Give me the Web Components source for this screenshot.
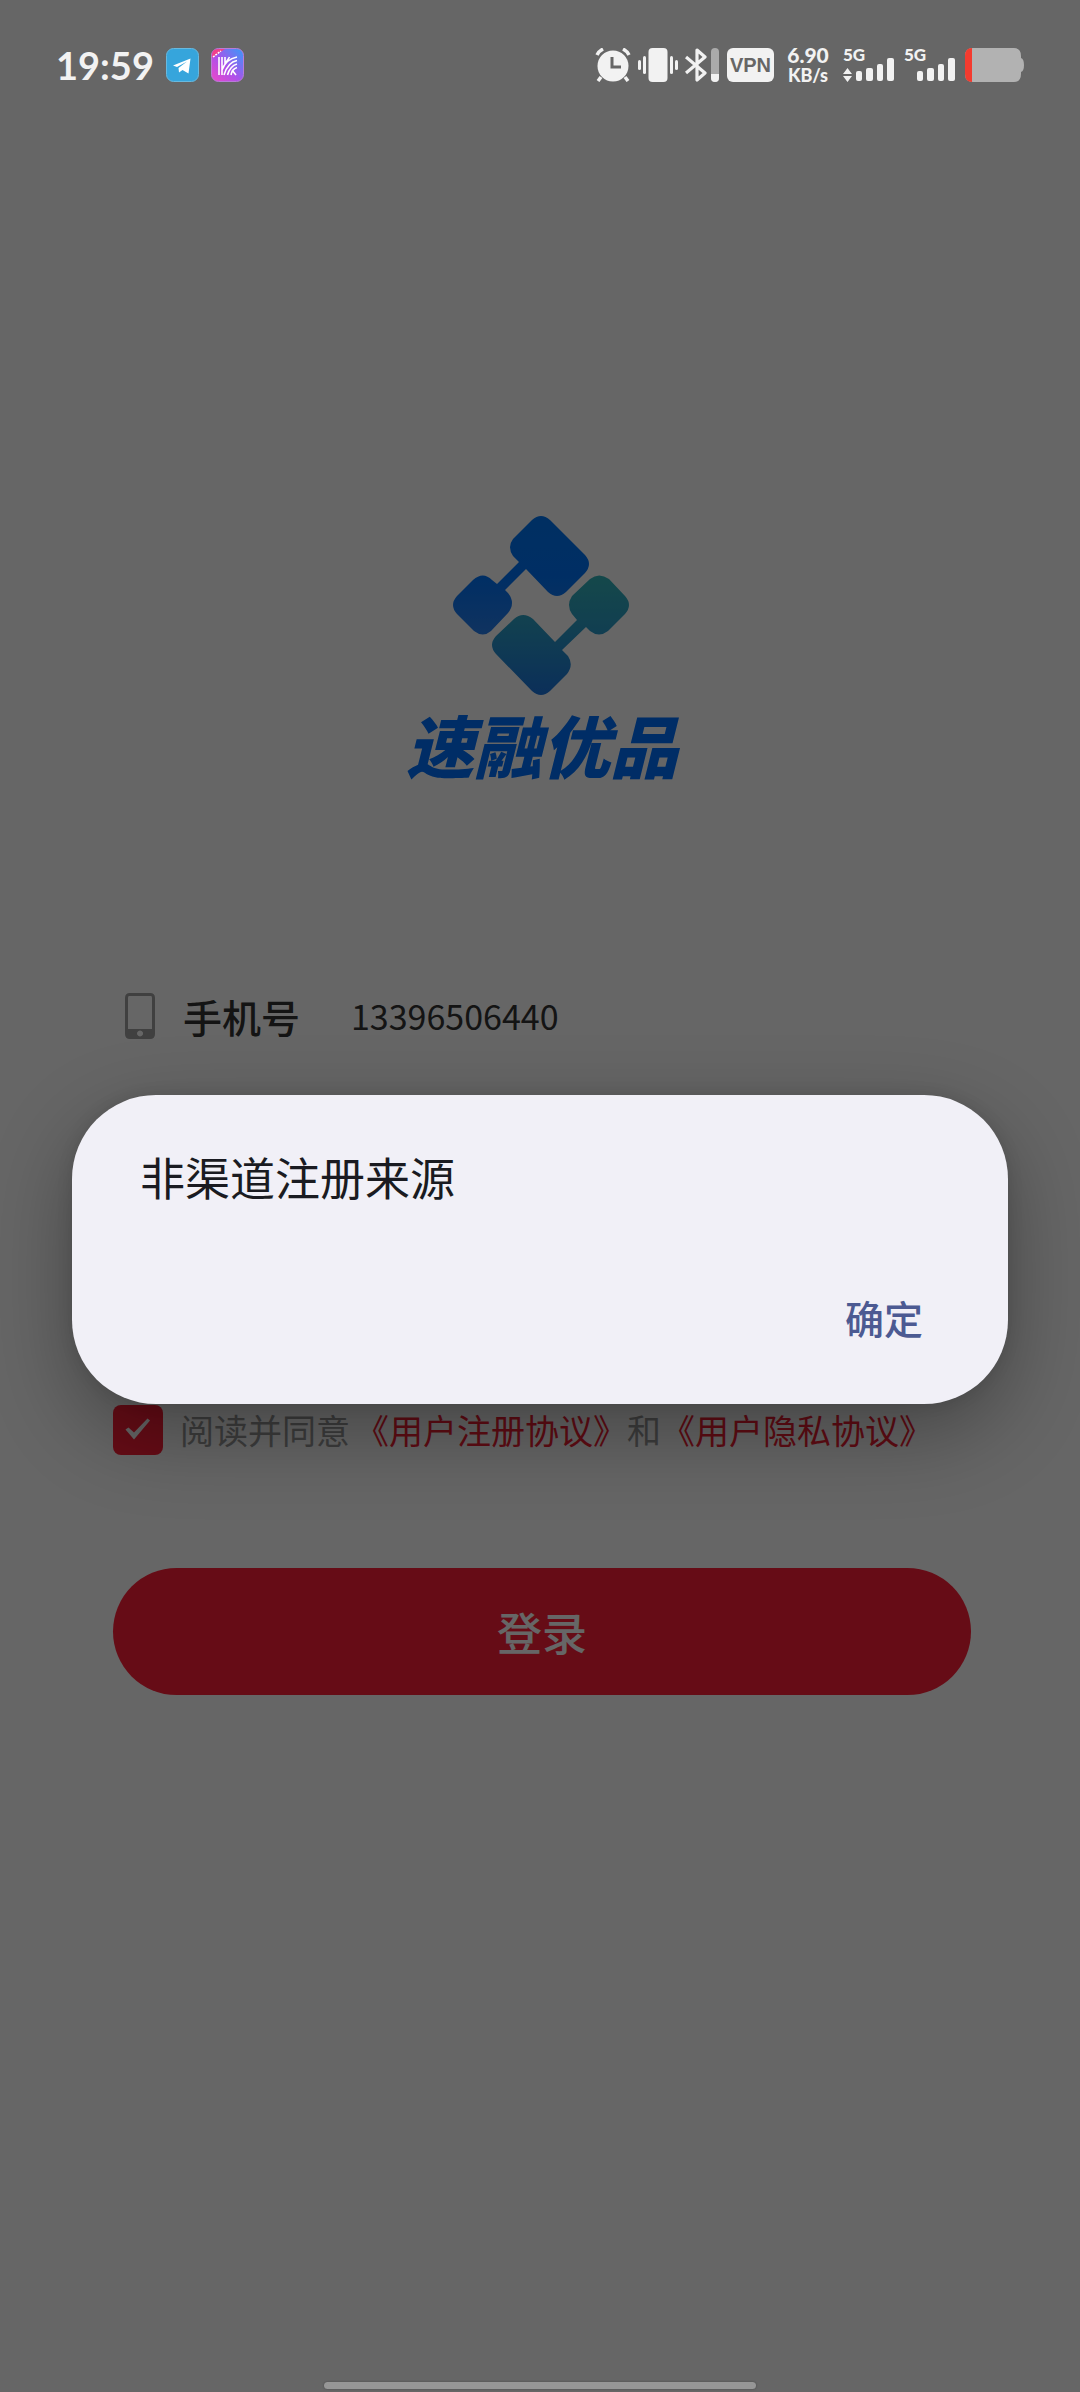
<!DOCTYPE html>
<html lang="zh-CN">
<head>
<meta charset="utf-8">
<meta name="viewport" content="width=device-width, initial-scale=1">
<title>速融优品</title>
<style>
html, body { margin: 0; min-height: 100%; }
body { background: #fff; font-family: "Noto Sans CJK SC", "Noto Sans", sans-serif; }
</style>
</head>
<body>
<login-screen></login-screen>

<template id="status-bar">
<style>
:host { display: flex; align-items: center; justify-content: space-between; box-sizing: border-box; height: 107px; padding: 23px 56px 0; color: #f2f2f2; font-family: Lato, sans-serif; font-weight: 700; }
.left, .right { display: flex; align-items: center; }
.left { gap: 12px; }
.right { gap: 7px; }
.time { font-size: 38px; line-height: 42px; }
svg { display: block; flex: none; }
.vpn { background: #f2f2f2; color: #666; border-radius: 6px; width: 47px; text-align: center; font: 700 20px/34px "Liberation Sans", sans-serif; margin-right: 5px; }
.rate { text-align: center; line-height: 20px; font-size: 21px; width: 44px; font-weight: 900; margin-right: 6px; }
.rate small { display: block; font-size: 18px; }
.signal { display: flex; flex-direction: column; width: 54px; height: 34px; }
.signal span { font-size: 17px; line-height: 14px; font-weight: 900; }
.signal svg { overflow: visible; }
</style>
<div class="left">
  <span class="time">19:59</span>
  <svg width="33" height="34" viewBox="0 0 33 34"><rect x=".5" y=".5" width="32" height="33" rx="7" fill="#36a5dc" stroke="#68b9df"/><path d="M7 17.500 24.500 10.500 22.500 25.500 16.500 22 13 24.500 12.500 20 21 13.500 11 19z" fill="#fff"/></svg>
  <svg width="33" height="34" viewBox="0 0 33 34"><defs><linearGradient id="k" x1="0" y1="1" x2="1" y2="0"><stop offset="0" stop-color="#ef48c8"/><stop offset=".45" stop-color="#ad50ea"/><stop offset="1" stop-color="#329dfa"/></linearGradient></defs><rect x=".5" y=".5" width="32" height="33" rx="7" fill="url(#k)" stroke="#b97bd8"/><path d="M1 10V7Q1 1 7 1h7z" fill="#f0408c"/><path d="M2 9 10 3" stroke="#fff" stroke-dasharray="2 1" stroke-width="1.500"/><g fill="none" stroke="#fff" stroke-width="1.600"><path d="M8 9v18M11 9v18M14 9v7M26 9Q15 11 11 22M26 12.500Q17 14 13 27M26 16Q19 18 16.500 27M26 19.500Q21 21 20 27M21 22l4 5M18.500 9Q17 12 14 15"/></g></svg>
</div>
<div class="right">
  <svg width="36" height="34" viewBox="0 0 36 34"><circle cx="18" cy="18" r="15.500" fill="#f2f2f2"/><path d="M2 7Q4 3 8 1M34 7Q32 3 28 1M6 29 3 33M30 29l3 4" stroke="#f2f2f2" stroke-width="3.500" fill="none"/><path d="M17 9v10h9" fill="none" stroke="#666" stroke-width="3"/></svg>
  <svg width="40" height="34" viewBox="0 0 40 34" fill="#f2f2f2"><rect x="10.500" width="19" height="34" rx="4"/><rect x="0" y="12" width="3" height="10" rx="1.500"/><rect x="5" y="8" width="3" height="18" rx="1.500"/><rect x="32" y="8" width="3" height="18" rx="1.500"/><rect x="37" y="12" width="3" height="10" rx="1.500"/></svg>
  <svg width="35" height="34" viewBox="0 0 35 34"><path d="M1 9 20 25 12 32V2L20 9 1 25" fill="none" stroke="#f2f2f2" stroke-width="3.200" stroke-linejoin="round"/><rect x="26" width="8" height="34" rx="4" fill="#aaa"/><path d="M26 26h8v4a4 4 0 0 1-8 0z" fill="#f2f2f2"/></svg>
  <span class="vpn">VPN</span>
  <span class="rate">6.90<small>KB/s</small></span>
  <div class="signal"><span>5G</span><svg width="54" height="20" viewBox="0 0 54 20" fill="#f2f2f2"><path d="M4.500 6 9 12H0zM4.500 20 9 14H0z"/><rect x="13" y="9" width="6" height="10" rx="2"/><rect x="23" y="6" width="7" height="13" rx="2"/><rect x="34" y="2" width="6" height="17" rx="2"/><rect x="44" y="-4" width="7" height="23" rx="2"/></svg></div>
  <div class="signal"><span>5G</span><svg width="54" height="20" viewBox="0 0 54 20" fill="#f2f2f2"><rect x="13" y="9" width="6" height="10" rx="2"/><rect x="23" y="6" width="7" height="13" rx="2"/><rect x="34" y="2" width="6" height="17" rx="2"/><rect x="44" y="-4" width="7" height="23" rx="2"/></svg></div>
  <svg width="59" height="34" viewBox="0 0 59 34"><path d="M8 0H49Q56 0 56 8V10Q59 11 59 17T56 24V26Q56 34 49 34H8Q0 34 0 26V8Q0 0 8 0z" fill="#b2b2b2"/><path d="M7 0V34Q0 34 0 26V8Q0 0 7 0z" fill="#f43b2f"/></svg>
</div>
</template>

<template id="brand-logo">
<style>
:host { display: flex; flex-direction: column; align-items: center; color: #0072ff; }
svg { display: block; }
.name { font-size: 68px; line-height: 80px; font-weight: 900; font-style: italic; margin-top: 8px; }
</style>
<svg width="178" height="180" viewBox="0 0 178 180" role="img" aria-label="速融优品">
<defs>
<linearGradient id="a" gradientUnits="userSpaceOnUse" x1="0" y1="0" x2="0" y2="120"><stop offset="0" stop-color="#0076f5"/><stop offset=".5" stop-color="#0074fa"/><stop offset="1" stop-color="#2a80ee"/></linearGradient>
<linearGradient id="b" gradientUnits="userSpaceOnUse" x1="0" y1="60" x2="0" y2="180"><stop offset="0" stop-color="#34b4ba"/><stop offset=".4" stop-color="#2da0c8"/><stop offset="1" stop-color="#1c75e0"/></linearGradient>
</defs>
<g fill="url(#a)"><path d="M79 4Q88-4 97 4L132 39Q140 48 132 57L113 76Q104 84 95 76L73 53 52 74 55 77Q63 87 55 97L38 115Q30 122 21 115L4 98Q-4 89 4 80L20 64Q30 55 39 64L44 68 66 46 60 40Q54 31 60 23z"/></g>
<g fill="url(#b)"><path d="M61 103Q70 95 80 103L102 126 124 104 119 98Q113 89 119 80L137 63Q146 56 156 63L172 80Q180 89 172 98L155 115Q146 122 137 115L133 111 109 134 115 140Q121 149 114 158L97 175Q88 183 79 175L43 138Q35 129 43 120z"/></g>
</svg>
<div class="name">速融优品</div>
</template>

<template id="phone-field">
<style>
:host { display: flex; align-items: center; height: 60px; padding-left: 12px; }
svg { display: block; margin-right: 28px; flex: none; }
label { font-size: 39px; line-height: 60px; font-weight: 500; color: #333; width: 168px; }
input { all: unset; flex: 1; min-width: 0; font-family: inherit; font-size: 34px; line-height: 60px; color: #333; }
</style>
<svg width="30" height="46" viewBox="0 0 30 46"><path fill-rule="evenodd" fill="#a0a0a0" d="M5 0h20q5 0 5 5v36q0 5-5 5H5q-5 0-5-5V5q0-5 5-5zM4 3Q3 3 3 5V36H27V5Q27 3 26 3zM15 37.500a3 3 0 1 0 .1 0z"/></svg>
<label for="phone">手机号</label>
<input id="phone" type="tel" value="13396506440">
</template>

<template id="agreement-row">
<style>
:host { display: flex; align-items: center; height: 50px; font-size: 34px; line-height: 50px; color: #999; white-space: nowrap; }
input { appearance: none; margin: 0 17px 0 0; width: 50px; height: 50px; border-radius: 8px; flex: none; background: #ff2038 url('data:image/svg+xml,<svg xmlns="http://www.w3.org/2000/svg" viewBox="0 0 50 50"><path d="M12.500 24.500 15.500 22.500 21 27.500 34.500 13.500 37 15.500 21 34.500z" fill="white"/></svg>'); }
label { margin-right: 5px; }
a { color: #f01e34; text-decoration: none; }
</style>
<input id="agree" type="checkbox" checked><label for="agree">阅读并同意</label><a href="#terms">《用户注册协议》</a><span>和</span><a href="#privacy">《用户隐私协议》</a>
</template>

<template id="primary-button">
<style>
:host { display: block; }
button { display: block; width: 100%; height: 127px; border: 0; border-radius: 64px; background: #ff2038; color: #fff; font: 500 45px/127px "Noto Sans CJK SC", sans-serif; padding: 0; }
</style>
<button type="button"><slot></slot></button>
</template>

<template id="alert-dialog">
<style>
:host { display: block; box-sizing: border-box; width: 100%; background: #f1f0f7; border-radius: 84px; padding: 52px 68px 57px; box-shadow: 0 28px 84px rgba(0,0,0,.32), 0 0 16px rgba(0,0,0,.1); }
h2 { margin: 0; font-weight: 400; font-size: 45px; line-height: 60px; color: #1a1b21; }
.actions { display: flex; justify-content: flex-end; margin-top: 80px; }
button { all: unset; font-size: 39px; line-height: 60px; font-weight: 500; color: #4c5a92; padding: 0 17px; }
</style>
<h2><slot></slot></h2>
<div class="actions"><button type="button">确定</button></div>
</template>

<template id="login-screen">
<style>
:host { display: grid; grid-template-rows: minmax(100vh, auto); grid-template-columns: 100%; }
main, .scrim { grid-area: 1 / 1; box-sizing: border-box; }
main { padding: 516px 109px 0 113px; }
brand-logo { margin-bottom: 202px; }
agreement-row { margin-top: 359px; }
primary-button { margin-top: 113px; }
.scrim { z-index: 1; background: rgba(0,0,0,.6); display: flex; flex-direction: column; }
.stage { flex: 1; display: flex; align-items: center; padding: 0 72px; margin-bottom: -10px; }
.home { align-self: center; width: 40%; height: 7px; border-radius: 4px; background: #969696; margin-bottom: 3px; box-shadow: 0 0 2px #444; }
</style>
<main>
  <brand-logo></brand-logo>
  <phone-field></phone-field>
  <agreement-row></agreement-row>
  <primary-button>登录</primary-button>
</main>
<div class="scrim">
  <status-bar></status-bar>
  <div class="stage"><alert-dialog role="alertdialog">非渠道注册来源</alert-dialog></div>
  <div class="home"></div>
</div>
</template>

<script>
for (const name of ['status-bar', 'brand-logo', 'phone-field', 'agreement-row', 'primary-button', 'alert-dialog', 'login-screen']) {
  customElements.define(name, class extends HTMLElement {
    constructor() {
      super();
      this.attachShadow({ mode: 'open' }).append(document.getElementById(name).content.cloneNode(true));
    }
  });
}
</script>
</body>
</html>
